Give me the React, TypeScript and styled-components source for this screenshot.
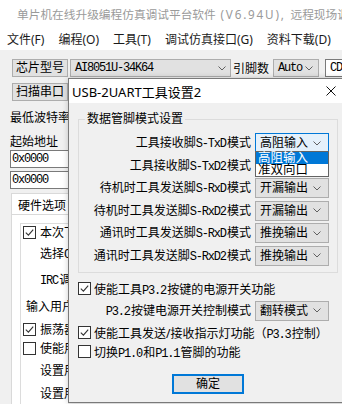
import React from "react";
import styled, { createGlobalStyle } from "styled-components";

const GlobalStyle = createGlobalStyle`
  html, body {
    margin: 0;
    padding: 0;
    background: #f0f0f0;
  }
  body {
    font-family: "Noto Sans", "Noto Sans CJK SC", sans-serif;
    font-size: 12px;
    color: #000;
    overflow: hidden;
  }
  *, *::before, *::after {
    box-sizing: border-box;
  }
`;

const Window = styled.div`
  position: relative;
  width: 342px;
  height: 404px;
  overflow: hidden;
  background: #f0f0f0;
`;

const TitleBar = styled.div`
  display: flex;
  align-items: center;
  gap: 10px;
  height: 28px;
  padding: 0 0 2px 7px;
  background: #fff;
  color: #9a9a9a;
  font-size: 11.7px;
  white-space: nowrap;
`;

const TitleVersion = styled.span`
  letter-spacing: 1.8px;
`;

const MenuBar = styled.div`
  display: flex;
  align-items: center;
  gap: 14px;
  height: 22px;
  padding-left: 7px;
  background: #fff;
  color: #1a1a1a;
  white-space: nowrap;
`;

// latin text drawn in the old SimSun-like monospace
const Mono = styled.span`
  font-family: "Liberation Mono", "DejaVu Sans Mono", monospace;
  font-size: 12px;
  letter-spacing: -1.2px;
  padding-right: 1.2px;
  line-height: 1;
`;

const Toolbar = styled.div`
  display: flex;
  flex-direction: column;
  gap: 6px;
  padding: 9px 0 0 12px;
`;

const ToolRow = styled.div`
  display: flex;
  align-items: center;
  height: 18px;
  white-space: nowrap;
`;

const PushButton = styled.div<{ $w: number; $h: number; $default?: boolean }>`
  display: flex;
  align-items: center;
  justify-content: center;
  flex: none;
  width: ${(p) => p.$w}px;
  height: ${(p) => p.$h}px;
  background: #e1e1e1;
  border: ${(p) => (p.$default ? "2px solid #0078d7" : "1px solid #adadad")};
  line-height: 1;
`;

const ComboBox = styled.div<{ $w: number; $h: number; $focused?: boolean; $white?: boolean; $ml?: number }>`
  position: relative;
  display: flex;
  align-items: center;
  flex: none;
  width: ${(p) => p.$w}px;
  height: ${(p) => p.$h}px;
  margin-left: ${(p) => p.$ml ?? 0}px;
  padding-left: 4px;
  background: ${(p) => (p.$focused ? "#e5f1fb" : p.$white ? "#fff" : "#e1e1e1")};
  border: 1px solid ${(p) => (p.$focused ? "#0078d7" : p.$white ? "#7a7a7a" : "#adadad")};
  white-space: nowrap;
  line-height: 1;
`;

const ChevronSvg = styled.svg<{ $mr: number }>`
  flex: none;
  margin-left: auto;
  margin-right: ${(p) => p.$mr}px;
`;

const Chevron = ({ mr = 7 }: { mr?: number }) => (
  <ChevronSvg $mr={mr} width="8" height="5" viewBox="0 0 8 5">
    <path d="M0.5 0.5 L4 4 L7.5 0.5" fill="none" stroke="#606060" strokeWidth="1" />
  </ChevronSvg>
);

const ToolLabel = styled.span`
  margin-left: 2px;
`;

// only the strip left of the dialog is ever visible
const LeftPanel = styled.div`
  display: flex;
  flex-direction: column;
  width: 68px;
  height: 303px;
  padding-left: 10px;
  overflow: hidden;
  white-space: nowrap;
`;

const Caption = styled.div<{ $mt: number }>`
  flex: none;
  height: 16px;
  line-height: 16px;
  margin-top: ${(p) => p.$mt}px;
`;

const AddrInput = styled.div<{ $mt: number }>`
  display: flex;
  align-items: center;
  flex: none;
  width: 120px;
  height: 18px;
  margin-top: ${(p) => p.$mt}px;
  padding-left: 1px;
  background: #fff;
  border: 1px solid #7a7a7a;
`;

const TabHeader = styled.div`
  display: flex;
  align-items: center;
  flex: none;
  width: 80px;
  height: 22px;
  margin: 4px 0 0 1px;
  padding-left: 6px;
  background: #fff;
  border: 1px solid #d9d9d9;
  border-bottom: none;
`;

const TabPage = styled.div`
  flex: none;
  width: 320px;
  height: 200px;
  margin: -1px 0 0 1px;
  padding: 8px 0 0 8px;
  background: #fff;
  border: 1px solid #d9d9d9;
`;

const OptionGroup = styled.div`
  display: flex;
  flex-direction: column;
  height: 200px;
  padding-left: 2px;
  border: 1px solid #dcdcdc;
`;

const OptionRow = styled.div<{ $mt: number; $indent: number }>`
  display: flex;
  align-items: center;
  flex: none;
  gap: 4px;
  height: 16px;
  margin-top: ${(p) => p.$mt}px;
  padding-left: ${(p) => p.$indent}px;
`;

const CheckBoxFrame = styled.span`
  display: inline-flex;
  align-items: center;
  justify-content: center;
  flex: none;
  width: 13px;
  height: 13px;
  background: #fff;
  border: 1px solid #333;
`;

const Check = ({ checked }: { checked?: boolean }) => (
  <CheckBoxFrame>
    {checked && (
      <svg width="11" height="11" viewBox="0 0 11 11">
        <path d="M1.8 5.6 L4.4 8.2 L9.2 2.6" fill="none" stroke="#333" strokeWidth="1.1" />
      </svg>
    )}
  </CheckBoxFrame>
);

const Dialog = styled.div`
  position: absolute;
  left: 68px;
  top: 78px;
  z-index: 5;
  display: flex;
  flex-direction: column;
  width: 280px;
  height: 325px;
  background: #f0f0f0;
  border: 1px solid #7a7a7a;
  box-shadow: 0 0 6px rgba(0, 0, 0, 0.2);
`;

const DialogTitle = styled.div`
  display: flex;
  align-items: center;
  flex: none;
  height: 24px;
  padding-left: 3px;
  background: #fff;
  font-size: 13px;
  white-space: nowrap;
`;

const CloseSvg = styled.svg`
  margin-left: auto;
  margin-right: 11px;
`;

const DialogBody = styled.div`
  display: flex;
  flex-direction: column;
  padding: 8px 9px 0;
  white-space: nowrap;
`;

const GroupBox = styled.fieldset`
  min-width: 0;
  margin: 0;
  padding: 6px 8px 6px 0;
  border: 1px solid #dcdcdc;
`;

const GroupLegend = styled.legend`
  margin-left: 6px;
  padding: 0 2px;
  line-height: 16px;
`;

const ModeGrid = styled.div`
  display: grid;
  grid-template-columns: 1fr 74px;
  grid-auto-rows: 20px;
  column-gap: 4px;
  row-gap: 2.5px;
`;

const ModeLabel = styled.div`
  height: 20px;
  line-height: 20px;
  text-align: right;
`;

const DropList = styled.div`
  position: absolute;
  top: calc(100% - 1px);
  left: -1px;
  z-index: 3;
  width: 74px;
  background: #fff;
  border: 1px solid #646464;
`;

const DropItem = styled.div<{ $selected?: boolean }>`
  height: 12px;
  padding-left: 2px;
  line-height: 12px;
  font-size: 12.5px;
  background: ${(p) => (p.$selected ? "#0078d7" : "#fff")};
  color: ${(p) => (p.$selected ? "#fff" : "#000")};
`;

const CheckRow = styled.div<{ $mt: number; $h: number }>`
  display: flex;
  align-items: center;
  gap: 3px;
  height: ${(p) => p.$h}px;
  margin-top: ${(p) => p.$mt}px;
`;

const ControlRow = styled.div`
  display: grid;
  grid-template-columns: 1fr 74px;
  column-gap: 4px;
  align-items: center;
  height: 20px;
  margin-top: 2px;
  padding-right: 9px;
`;

const ButtonRow = styled.div`
  display: flex;
  justify-content: center;
  margin-top: 13.5px;
`;

const AppIcon = () => (
  <svg width="12" height="12" viewBox="0 0 12 12">
    <defs>
      <clipPath id="logoClip">
        <path d="M0 12 L0 1 A11 11 0 0 1 11 12 Z" />
      </clipPath>
    </defs>
    <g clipPath="url(#logoClip)">
      <rect x="0" y="1" width="12" height="1.6" fill="#e8336d" />
      <rect x="0" y="3.4" width="12" height="1.6" fill="#e8336d" />
      <rect x="0" y="5.8" width="12" height="1.6" fill="#e8336d" />
      <rect x="0" y="8.2" width="12" height="1.6" fill="#e8336d" />
    </g>
    <path d="M0.5 11.5 Q3.5 6.5 8 9.5" fill="none" stroke="#1d3fa8" strokeWidth="2" />
  </svg>
);

const modeRows: { label: React.ReactNode; value: string; open?: boolean }[] = [
  { label: <>工具接收脚<Mono>S-TxD</Mono>模式</>, value: "高阻输入", open: true },
  { label: <>工具接收脚<Mono>S-TxD2</Mono>模式</>, value: "高阻输入" },
  { label: <>待机时工具发送脚<Mono>S-RxD</Mono>模式</>, value: "开漏输出" },
  { label: <>待机时工具发送脚<Mono>S-RxD2</Mono>模式</>, value: "开漏输出" },
  { label: <>通讯时工具发送脚<Mono>S-RxD</Mono>模式</>, value: "推挽输出" },
  { label: <>通讯时工具发送脚<Mono>S-RxD2</Mono>模式</>, value: "推挽输出" },
];

export default function App() {
  return (
    <Window>
      <GlobalStyle />
      <TitleBar>
        <AppIcon />
        <span>
          单片机在线升级编程仿真调试平台软件<TitleVersion> (V6.94U), </TitleVersion>远程现场调试
        </span>
      </TitleBar>
      <MenuBar>
        <span>文件(F)</span>
        <span>编程(O)</span>
        <span>工具(T)</span>
        <span>调试仿真接口(G)</span>
        <span>资料下载(D)</span>
      </MenuBar>

      <Toolbar>
        <ToolRow>
          <PushButton $w={56} $h={18}>芯片型号</PushButton>
          <ComboBox $w={161} $h={18} $ml={2}>
            <Mono>AI8051U-34K64</Mono>
            <Chevron mr={4} />
          </ComboBox>
          <ToolLabel>引脚数</ToolLabel>
          <ComboBox $w={46} $h={18} $ml={4}>
            <Mono>Auto</Mono>
            <Chevron mr={5} />
          </ComboBox>
          <ComboBox $w={60} $h={18} $ml={6} $white>
            <Mono>CDC</Mono>
          </ComboBox>
        </ToolRow>
        <ToolRow>
          <PushButton $w={56} $h={18}>扫描串口</PushButton>
        </ToolRow>
      </Toolbar>

      <LeftPanel>
        <Caption $mt={9}>最低波特率</Caption>
        <Caption $mt={8}>起始地址</Caption>
        <AddrInput $mt={0}><Mono>0x0000</Mono></AddrInput>
        <AddrInput $mt={3}><Mono>0x0000</Mono></AddrInput>
        <TabHeader>硬件选项</TabHeader>
        <TabPage>
          <OptionGroup>
            <OptionRow $mt={0} $indent={0}>
              <Check checked />
              <span>本次下载需要修改硬件选项</span>
            </OptionRow>
            <OptionRow $mt={5} $indent={17}>
              <span>选择<Mono>CPU-Core</Mono>最高工作电压</span>
            </OptionRow>
            <OptionRow $mt={10} $indent={17}>
              <span><Mono>IRC</Mono>调节方式</span>
            </OptionRow>
            <OptionRow $mt={11} $indent={3}>
              <span>输入用户程序运行时的<Mono>IRC</Mono>频率</span>
            </OptionRow>
            <OptionRow $mt={7} $indent={0}>
              <Check checked />
              <span>振荡器放大增益</span>
            </OptionRow>
            <OptionRow $mt={3} $indent={0}>
              <Check />
              <span>使能用户<Mono>EEPROM</Mono>大小</span>
            </OptionRow>
            <OptionRow $mt={6} $indent={17}>
              <span>设置用户<Mono>EEPROM</Mono>大小</span>
            </OptionRow>
            <OptionRow $mt={7} $indent={17}>
              <span>设置用户程序区大小</span>
            </OptionRow>
          </OptionGroup>
        </TabPage>
      </LeftPanel>

      <Dialog>
        <DialogTitle>
          <span>USB-2UART工具设置2</span>
          <CloseSvg width="10" height="10" viewBox="0 0 10 10">
            <path d="M0.5 0.5 L9.5 9.5 M9.5 0.5 L0.5 9.5" stroke="#111" strokeWidth="1" />
          </CloseSvg>
        </DialogTitle>
        <DialogBody>
          <GroupBox>
            <GroupLegend>数据管脚模式设置</GroupLegend>
            <ModeGrid>
              {modeRows.map((row, i) => (
                <React.Fragment key={i}>
                  <ModeLabel>{row.label}</ModeLabel>
                  <ComboBox $w={74} $h={20} $focused={row.open}>
                    {row.value}
                    <Chevron />
                    {row.open && (
                      <DropList>
                        <DropItem $selected>高阻输入</DropItem>
                        <DropItem>准双向口</DropItem>
                      </DropList>
                    )}
                  </ComboBox>
                </React.Fragment>
              ))}
            </ModeGrid>
          </GroupBox>

          <CheckRow $mt={6} $h={20}>
            <Check checked />
            <span>使能工具<Mono>P3.2</Mono>按键的电源开关功能</span>
          </CheckRow>
          <ControlRow>
            <ModeLabel><Mono>P3.2</Mono>按键电源开关控制模式</ModeLabel>
            <ComboBox $w={74} $h={20}>
              翻转模式
              <Chevron />
            </ComboBox>
          </ControlRow>
          <CheckRow $mt={2} $h={20}>
            <Check checked />
            <span>使能工具发送/接收指示灯功能（<Mono>P3.3</Mono>控制）</span>
          </CheckRow>
          <CheckRow $mt={0} $h={18}>
            <Check />
            <span>切换<Mono>P1.0</Mono>和<Mono>P1.1</Mono>管脚的功能</span>
          </CheckRow>
          <ButtonRow>
            <PushButton $w={72} $h={20} $default>确定</PushButton>
          </ButtonRow>
        </DialogBody>
      </Dialog>
    </Window>
  );
}
